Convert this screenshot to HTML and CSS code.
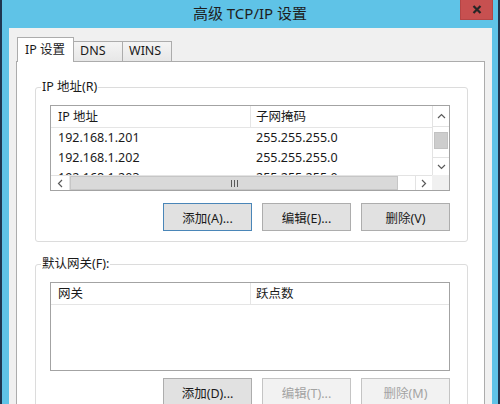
FILE: index.html
```html
<!DOCTYPE html>
<html lang="zh-CN">
<head>
    <meta charset="UTF-8">
    <title>高级 TCP/IP 设置</title>
    <link rel="stylesheet" href="styles.css">
</head>
<body>
    <div class="window">
        <!-- Title bar -->
        <div class="titlebar">
            <span></span>
            <div class="title">高级 TCP/IP 设置</div>
            <button class="close" type="button">
                <svg width="10" height="9" viewBox="0 0 10 9"><path d="M1.5 1 8.5 8M8.5 1 1.5 8" stroke="#262626" stroke-width="2.2" fill="none"/></svg>
            </button>
        </div>

        <div class="client">
            <!-- Tabs -->
            <div class="tabs">
                <div class="tab active">IP 设置</div>
                <div class="tab">DNS</div>
                <div class="tab">WINS</div>
            </div>

            <div class="panel">
                <!-- IP addresses -->
                <fieldset class="group">
                    <legend>IP 地址(R)</legend>
                    <div class="listview lv-scroll">
                        <div class="lv-rows">
                            <div class="lv-row lv-head"><span>IP 地址</span><span>子网掩码</span></div>
                            <div class="lv-row"><span>192.168.1.201</span><span>255.255.255.0</span></div>
                            <div class="lv-row"><span>192.168.1.202</span><span>255.255.255.0</span></div>
                            <div class="lv-row"><span>192.168.1.203</span><span>255.255.255.0</span></div>
                        </div>
                        <div class="vscroll">
                            <div class="sb-btn sb-up">
                                <svg width="9" height="6" viewBox="0 0 9 6"><path d="M1 5 4.5 1.5 8 5" fill="none" stroke="#5a5a5a" stroke-width="1.2"/></svg>
                            </div>
                            <div class="sb-track"><div class="thumb-v"></div></div>
                            <div class="sb-btn sb-down">
                                <svg width="9" height="6" viewBox="0 0 9 6"><path d="M1 1 4.5 4.5 8 1" fill="none" stroke="#5a5a5a" stroke-width="1.2"/></svg>
                            </div>
                        </div>
                        <div class="hscroll">
                            <div class="sb-btn sb-left">
                                <svg width="6" height="9" viewBox="0 0 6 9"><path d="M5 1 1.5 4.5 5 8" fill="none" stroke="#5a5a5a" stroke-width="1.2"/></svg>
                            </div>
                            <div class="thumb-h">
                                <svg width="7" height="7" viewBox="0 0 7 7"><path d="M0.5 0v7M3.5 0v7M6.5 0v7" stroke="#5a5a5a" stroke-width="1"/></svg>
                            </div>
                            <div class="sb-track-h"></div>
                            <div class="sb-btn sb-right">
                                <svg width="6" height="9" viewBox="0 0 6 9"><path d="M1 1 4.5 4.5 1 8" fill="none" stroke="#5a5a5a" stroke-width="1.2"/></svg>
                            </div>
                        </div>
                        <div class="sb-corner"></div>
                    </div>
                    <div class="buttons">
                        <button class="btn default" type="button">添加(A)...</button>
                        <button class="btn" type="button">编辑(E)...</button>
                        <button class="btn" type="button">删除(V)</button>
                    </div>
                </fieldset>

                <!-- Default gateways -->
                <fieldset class="group group-gw">
                    <legend>默认网关(F):</legend>
                    <div class="listview lv-plain">
                        <div class="lv-row lv-head"><span>网关</span><span>跃点数</span></div>
                    </div>
                    <div class="buttons">
                        <button class="btn" type="button">添加(D)...</button>
                        <button class="btn" type="button" disabled>编辑(T)...</button>
                        <button class="btn" type="button" disabled>删除(M)</button>
                    </div>
                </fieldset>
            </div>
        </div>
    </div>
</body>
</html>
```

FILE: styles.css
```css
* {
    margin: 0;
    padding: 0;
    box-sizing: border-box;
}

html, body {
    width: 500px;
    height: 404px;
    overflow: hidden;
}

body {
    background-color: #1f3650;
    font-family: "Noto Sans", "Noto Sans CJK SC", sans-serif;
    font-size: 12.5px;
    color: #1a1a1a;
}

.window {
    margin-left: 2px;
    width: 496px;
    height: 404px;
    background-color: #5fc3e7;
    display: flex;
    flex-direction: column;
}

/* Title bar */
.titlebar {
    height: 28px;
    flex-shrink: 0;
    display: grid;
    grid-template-columns: 1fr auto 1fr;
}

.title {
    font-size: 15px;
    line-height: 26px;
    color: #1e1e1e;
}

.close {
    justify-self: end;
    align-self: start;
    width: 33px;
    height: 20px;
    margin-right: 5px;
    background-color: #c75050;
    border: 1px solid #b44545;
    border-top: 0;
    display: flex;
    align-items: center;
    justify-content: center;
}

/* Client area */
.client {
    flex: 1;
    margin: 0 6px 0 7px;
    padding: 9px 7px 0 7px;
    background-color: #f0f0f0;
    display: flex;
    flex-direction: column;
}

.tabs {
    display: flex;
    align-items: flex-end;
    height: 25px;
    margin-bottom: -1px;
    padding-left: 1px;
    position: relative;
    z-index: 1;
}

.tab {
    width: 50px;
    height: 20px;
    margin-bottom: 1px;
    margin-left: -1px;
    padding-left: 6px;
    line-height: 17px;
    border: 1px solid #acacac;
    border-bottom: 0;
    background: linear-gradient(#f4f4f4, #e7e7e7);
}

.tab.active {
    width: 57px;
    height: 25px;
    margin-bottom: 0;
    margin-left: 0;
    padding-left: 7px;
    line-height: 24px;
    background: #fff;
    position: relative;
    z-index: 1;
}

.panel {
    flex: 1;
    background-color: #fff;
    border: 1px solid #acacac;
    border-bottom: 0;
    padding: 17px 16px 0 18px;
}

/* Group boxes */
.group {
    border: 1px solid #dcdcdc;
    border-radius: 3px;
    padding: 10px 17px 10px 14px;
}

.group legend {
    margin-left: -9px;
    padding: 0 1px;
    line-height: 16px;
}

.group + .group {
    margin-top: 14px;
}

/* List views */
.listview {
    border: 1px solid #a3a3a3;
    background-color: #fff;
}

.lv-scroll {
    display: grid;
    grid-template-columns: 1fr 17px;
    grid-template-rows: 69px 15px;
    height: 86px;
}

.lv-plain {
    height: 89px;
}

.lv-rows {
    overflow: hidden;
}

.lv-row {
    display: flex;
    height: 20px;
    line-height: 20px;
    white-space: nowrap;
}

.lv-row span:first-child {
    width: 200px;
    padding-left: 7px;
}

.lv-row span + span {
    padding-left: 5px;
}

.lv-head {
    height: 22px;
    line-height: 21px;
    border-bottom: 1px solid #e5e5e5;
}

.lv-head span:first-child {
    border-right: 1px solid #e5e5e5;
}

/* Scroll bars */
.sb-btn {
    display: flex;
    align-items: center;
    justify-content: center;
}

.vscroll {
    display: flex;
    flex-direction: column;
    border-left: 1px solid #e3e3e3;
}

.sb-up {
    height: 21px;
    border-bottom: 1px solid #e3e3e3;
}

.sb-track {
    flex: 1;
    padding: 5px 1px 0;
}

.thumb-v {
    height: 17px;
    background-color: #cdcdcd;
    border: 1px solid #c2c2c2;
}

.sb-down {
    height: 18px;
    border-top: 1px solid #e3e3e3;
}

.hscroll {
    display: flex;
    border-top: 1px solid #e3e3e3;
}

.sb-left {
    width: 19px;
    border-right: 1px solid #e3e3e3;
}

.thumb-h {
    width: 328px;
    background-color: #d9d9d9;
    border: 1px solid #c6c6c6;
    display: flex;
    align-items: center;
    justify-content: center;
}

.sb-track-h {
    flex: 1;
}

.sb-right {
    width: 17px;
    border-left: 1px solid #e3e3e3;
}

.sb-corner {
    background-color: #f0f0f0;
}

/* Buttons */
.buttons {
    display: flex;
    justify-content: flex-end;
    gap: 10px;
    margin-top: 12px;
}

.group-gw .buttons {
    margin-top: 7px;
}

.btn {
    width: 89px;
    height: 28px;
    border: 1px solid #adadad;
    background-color: #e1e1e1;
    font: inherit;
    color: inherit;
}

.btn.default {
    border-color: #4a86b8;
}

.btn:disabled {
    color: #a3a3a3;
    background-color: #f2f2f2;
    border-color: #c4c4c4;
}
```
